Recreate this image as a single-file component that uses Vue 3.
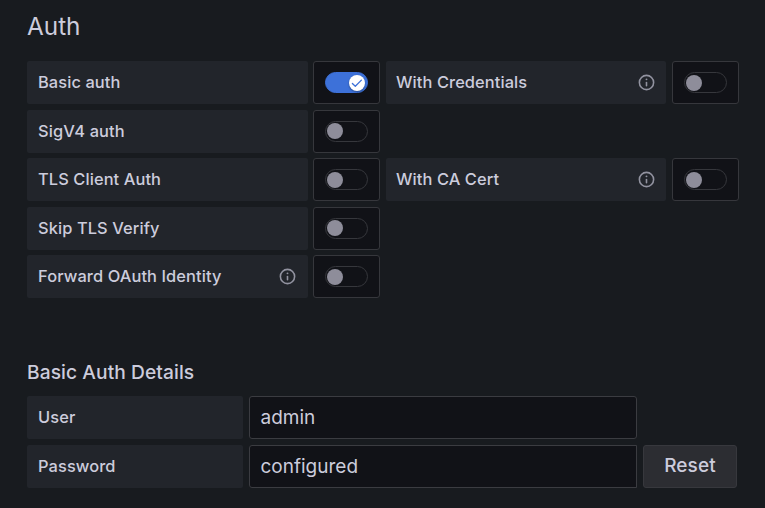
<script setup>
import { ref } from 'vue'

const rows = ref([
  [{ label: 'Basic auth', on: true }, { label: 'With Credentials', info: true }],
  [{ label: 'SigV4 auth' }],
  [{ label: 'TLS Client Auth' }, { label: 'With CA Cert', info: true }],
  [{ label: 'Skip TLS Verify' }],
  [{ label: 'Forward OAuth Identity', info: true }],
])
</script>

<template>
  <main class="page">
    <h3 class="title">Auth</h3>
    <div class="rows">
      <div v-for="(row, i) in rows" :key="i" class="row">
        <div v-for="item in row" :key="item.label" class="field">
          <div class="label">
            <span>{{ item.label }}</span>
            <svg v-if="item.info" class="info" viewBox="0 0 24 24" fill="currentColor">
              <path d="M12 2a10 10 0 1 0 10 10A10 10 0 0 0 12 2Zm0 18a8 8 0 1 1 8-8 8 8 0 0 1-8 8Z" />
              <path d="M12 11a1 1 0 0 0-1 1v4a1 1 0 0 0 2 0v-4a1 1 0 0 0-1-1Z" />
              <circle cx="12" cy="8" r="1.2" />
            </svg>
          </div>
          <div class="switch-box">
            <button class="switch" :class="{ on: item.on }" role="switch" :aria-checked="!!item.on" @click="item.on = !item.on">
              <span class="knob">
                <svg v-if="item.on" viewBox="0 0 16 16"><path d="M3.4 8.5l2.9 2.8 6.1-6.2" /></svg>
              </span>
            </button>
          </div>
        </div>
      </div>
    </div>

    <h6 class="subtitle">Basic Auth Details</h6>
    <div class="details">
      <div class="row">
        <div class="label short">User</div>
        <div class="input">admin</div>
      </div>
      <div class="row">
        <div class="label short">Password</div>
        <div class="input square">configured</div>
        <button class="reset">Reset</button>
      </div>
    </div>
  </main>
</template>

<style>
body {
  margin: 0;
  background: #181b1f;
}
</style>

<style scoped>
.page {
  box-sizing: border-box;
  width: 765px;
  height: 508px;
  overflow: hidden;
  padding: 11px 0 0 27px;
  background: #181b1f;
  color: #ccccdc;
  font-family: Inter, "Liberation Sans", sans-serif;
}
.title {
  margin: 0 0 20px;
  font-size: 24.3px;
  font-weight: 400;
  line-height: 30px;
}
.rows,
.details {
  display: flex;
  flex-direction: column;
  gap: 5.5px;
}
.row {
  display: flex;
  gap: 6px;
  height: 43px;
}
.field {
  display: flex;
  gap: 5px;
}
.field + .field {
  gap: 6px;
}
.label {
  box-sizing: border-box;
  display: flex;
  align-items: center;
  justify-content: space-between;
  width: 281px;
  height: 43px;
  padding: 0 11px;
  border-radius: 2px;
  background: #22252b;
  font-size: 16.4px;
  font-weight: 550;
  line-height: 20px;
  letter-spacing: 0.1px;
}
.label.short,
.label span {
  padding-bottom: 1px;
}
.field + .field .label {
  width: 280px;
  padding: 0 10px;
}
.label.short {
  width: 216px;
}
.info {
  width: 19px;
  height: 19px;
  color: #9293a0;
}
.switch-box {
  box-sizing: border-box;
  display: flex;
  align-items: center;
  justify-content: center;
  width: 67px;
  height: 43px;
  border: 1px solid #36373c;
  border-radius: 3px;
  background: #111217;
}
.switch {
  box-sizing: border-box;
  display: flex;
  align-items: center;
  width: 43px;
  height: 21px;
  padding: 0 1px;
  border: 1px solid #36373c;
  border-radius: 11px;
  background: #111217;
}
.switch.on {
  justify-content: flex-end;
  padding-right: 2px;
  border-color: #3d71d9;
  background: #3d71d9;
}
.knob {
  display: flex;
  width: 16px;
  height: 16px;
  border-radius: 50%;
  background: #8e8d9a;
}
.on .knob {
  background: #fff;
  box-shadow: 0 1px 2px rgba(0, 0, 0, 0.35);
}
.knob svg {
  width: 16px;
  height: 16px;
  fill: none;
  stroke: #3d71d9;
  stroke-width: 1.3;
  stroke-linecap: round;
  stroke-linejoin: round;
}
.subtitle {
  margin: 61px 0 11px;
  font-size: 19.2px;
  font-weight: 530;
  line-height: 26px;
  letter-spacing: 0.08px;
}
.input {
  box-sizing: border-box;
  width: 388px;
  height: 43px;
  padding-left: 10.5px;
  border: 1px solid #3b3c41;
  border-radius: 3px;
  background: #111217;
  font-size: 19px;
  line-height: 41px;
}
.input.square {
  border-radius: 3px 0 0 3px;
}
.reset {
  box-sizing: border-box;
  width: 94px;
  height: 43px;
  padding: 0 0 1px;
  border: 1px solid #37383d;
  border-radius: 3px;
  background: #2c2d32;
  color: inherit;
  font: 530 19px/39px Inter, "Liberation Sans", sans-serif;
  letter-spacing: 0.1px;
}
</style>
